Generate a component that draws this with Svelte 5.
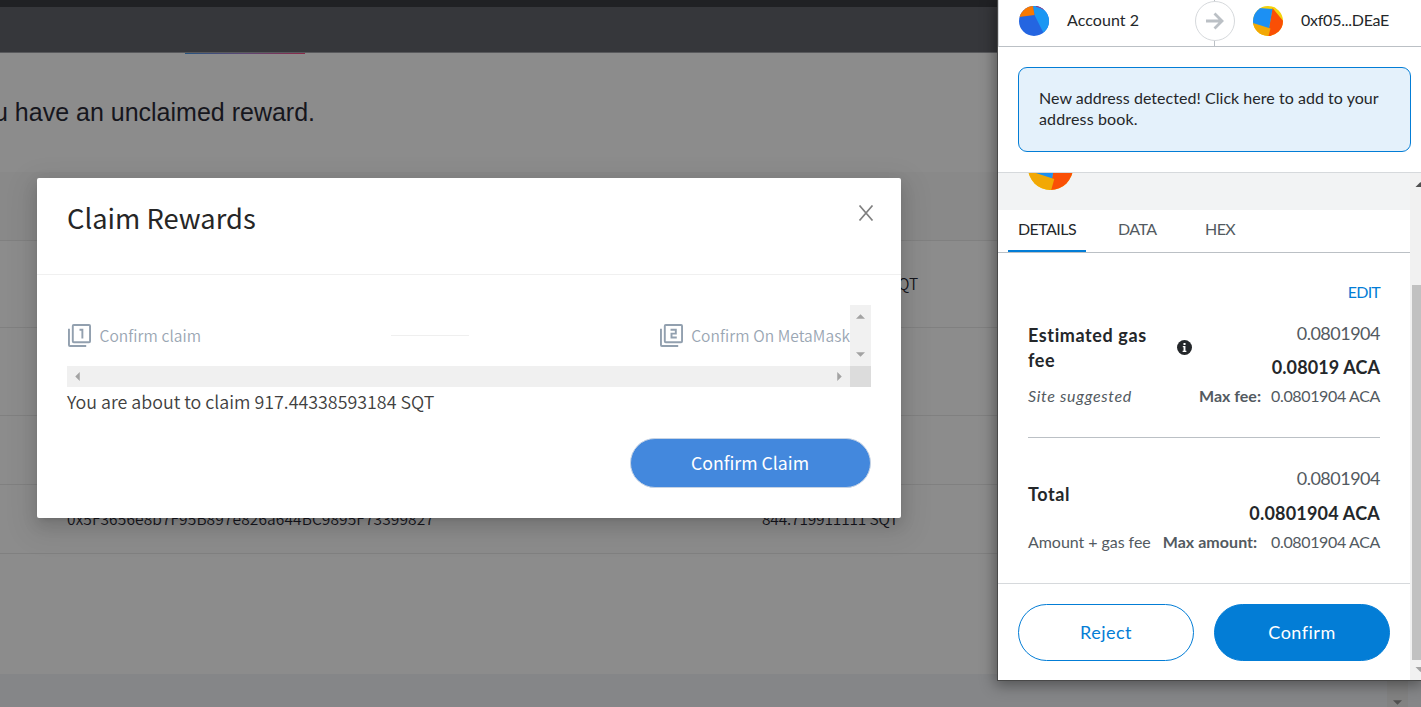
<script>
  const tabs = ['Details', 'Data', 'Hex'];
</script>

{#snippet orange(cls)}
  <svg class={cls} viewBox="0 0 30 30">
    <defs><clipPath id="{cls}-clip"><circle cx="15" cy="15" r="15" /></clipPath></defs>
    <g clip-path="url(#{cls}-clip)">
      <rect width="30" height="30" fill="#f4d20b" />
      <path d="M19.500 2L31 16V31H14L16 22Z" fill="#fa4f05" />
      <path d="M0 1.500L19.500 3L16 23L0 18Z" fill="#1c90f3" />
      <path d="M0 17L17.500 22.600L15.500 30H0Z" fill="#f2a805" />
    </g>
  </svg>
{/snippet}

{#snippet step(n)}
  <svg class="step-icon" viewBox="0 0 24 24" fill="none" stroke="#92a0af" stroke-width="2">
    <rect x="5" y="1" width="18" height="18" rx="1" />
    <path d="M1 5V22a1 1 0 0 0 1 1H19" />
    {#if n === 1}<path d="M12 6H15V15" />{:else}<path d="M11 6H16.500V10H12V14H17.500" />{/if}
  </svg>
{/snippet}

<div class="screen">
  <main class="page">
    <div class="strip"></div>
    <div class="navbar"></div>
    <div class="underline"></div>
    <h1><span>u have an unclaimed reward.</span></h1>
    <div class="row head"></div>
    <div class="row r1"><span>917.443385931 SQT</span></div>
    <div class="row r2"><span>844.719911111 SQT</span></div>
    <div class="row r3"></div>
    <div class="row r4"><span class="hash">0x5F3656e8b7F95B897e826a644BC9895F73399827</span><span class="amt">844.719911111 SQT</span></div>
    <div class="space"></div>
    <footer><div class="pagebar"><svg viewBox="0 0 10 5"><path d="M0 0H10L5 5Z" fill="#505050" /></svg></div></footer>
  </main>

  <section class="dialog">
    <header>
      <h2>Claim Rewards</h2>
      <svg class="close" viewBox="0 0 16 16"><path d="M1.500 .5L14.500 15.500M14.500 .5L1.500 15.500" stroke="#808080" stroke-width="1.700" /></svg>
    </header>
    <div class="body">
      <div class="scroller">
        <div class="steps">
          {@render step(1)}<span>Confirm claim</span>
          <i></i>
          {@render step(2)}<span>Confirm On MetaMask</span>
        </div>
        <div class="vbar">
          <svg viewBox="0 0 10 5"><path d="M0 5L5 0L10 5Z" /></svg>
          <svg viewBox="0 0 10 5"><path d="M0 0H10L5 5Z" /></svg>
        </div>
        <div class="hbar">
          <svg viewBox="0 0 5 10"><path d="M5 0V10L0 5Z" /></svg>
          <svg viewBox="0 0 5 10"><path d="M0 0V10L5 5Z" /></svg>
        </div>
        <div class="corner"></div>
      </div>
      <p>You are about to claim 917.44338593184 SQT</p>
      <button class="claim">Confirm Claim</button>
    </div>
  </section>

  <aside class="wallet">
    <div class="parties">
      <svg class="avatar" viewBox="0 0 30 30">
        <defs><clipPath id="blue-clip"><circle cx="15" cy="15" r="15" /></clipPath></defs>
        <g clip-path="url(#blue-clip)">
          <rect width="30" height="30" fill="#2465e1" />
          <path d="M14 0H30V30H26L15.500 9Z" fill="#1b97f3" />
          <path d="M0 0H14L15.500 9L0 11Z" fill="#fa7900" />
          <path d="M17 0H25V4Q21 1.200 17 .8Z" fill="#c81456" />
        </g>
      </svg>
      <span class="from">Account 2</span>
      <div class="arrow">
        <div class="ring"><svg viewBox="0 0 18 18" fill="none" stroke="#bbc0c5" stroke-width="2.800"><path d="M0 9H16M8.500 1.500L16 9L8.500 16.500" /></svg></div>
      </div>
      {@render orange('avatar')}
      <span class="to">0xf05...DEaE</span>
    </div>
    <div class="notice-wrap"><div class="notice">New address detected! Click here to add to your<br /><span>address book.</span></div></div>
    <div class="content">
      <div class="main">
        <div class="band">{@render orange('big')}</div>
        <nav>
          {#each tabs as t, i}<div class="tab t{i}" class:on={i === 0}>{t}</div>{/each}
        </nav>
        <div class="fees">
          <div class="edit">EDIT</div>
          <div class="item">
            <div class="label">Estimated gas<br />fee</div>
            <svg class="info" viewBox="0 0 16 16"><circle cx="8" cy="8" r="8" fill="#24272a" /><path d="M6.200 6.500H9V11.500H10V12.800H6V11.500H7V7.800H6.200ZM6.900 3.300H9.100V5.300H6.900Z" fill="#fff" /></svg>
            <div class="nums"><div>0.0801904</div><b>0.08019 ACA</b></div>
          </div>
          <div class="sub"><em>Site suggested</em><strong>Max fee:</strong><span>0.0801904 ACA</span></div>
          <hr />
          <div class="item total">
            <div class="label">Total</div>
            <div class="nums"><div>0.0801904</div><b class="wide">0.0801904 ACA</b></div>
          </div>
          <div class="sub"><small>Amount + gas fee</small><strong class="ma">Max amount:</strong><span>0.0801904 ACA</span></div>
        </div>
        <div class="actions"><button>Reject</button><button class="primary">Confirm</button></div>
      </div>
      <div class="sbar">
        <svg viewBox="0 0 10 5"><path d="M0 5L5 0L10 5Z" fill="#505050" /></svg>
        <div class="thumb"></div>
        <svg viewBox="0 0 10 5"><path d="M0 0H10L5 5Z" fill="#a3a3a3" /></svg>
      </div>
    </div>
  </aside>
</div>

<style>
  :global(body) { margin: 0; overflow: hidden; }
  .screen, .screen * { box-sizing: border-box; }
  h1, h2, p { margin: 0; font-weight: 400; }
  svg { display: block; flex: none; }
  .screen { position: relative; width: 1421px; height: 707px; overflow: hidden; font-family: "Noto Sans CJK SC", sans-serif; }

  .page { display: flex; flex-direction: column; height: 707px; background: #8c8c8c; color: #16161d; }
  .strip { height: 7px; background: #202124; }
  .navbar { height: 46px; background: #36373b; border-bottom: 1px solid #58595c; }
  .underline { width: 120px; height: 1px; margin-left: 185px; background: linear-gradient(90deg, #26537f, #5d4673 50%, #8b2848); }
  h1 { height: 118px; font: 25px/117px "Liberation Sans", sans-serif; white-space: nowrap; }
  h1 span { margin-left: -6px; }
  .row { display: flex; align-items: center; border-bottom: 1px solid #808080; font-size: 15.500px; white-space: nowrap; }
  .head { height: 69px; background: #898989; }
  .r1 { height: 87px; padding: 0 0 2px 779px; }
  .r2 { height: 88px; padding-left: 762px; }
  .r3 { height: 69px; }
  .r4 { height: 69px; padding: 0 0 2px 67px; }
  .hash { width: 695px; letter-spacing: .12px; }
  .row span { font-weight: 350; }
  .amt, .r2 span { letter-spacing: -.16px; }
  .space { flex: 1; }
  footer { height: 33px; background: #858688; display: flex; padding-left: 1387px; }
  .pagebar { width: 21px; background: #828282; padding: 26px 0 0 6px; }
  .pagebar svg { width: 9px; height: 5px; }

  .dialog { position: absolute; left: 37px; top: 178px; width: 864px; height: 340px; background: #fff; border-radius: 2px; box-shadow: 0 6px 16px rgba(0,0,0,.12), 0 3px 6px -4px rgba(0,0,0,.2), 0 9px 28px 8px rgba(0,0,0,.08); }
  .dialog header { height: 97px; display: flex; justify-content: space-between; padding: 18px 27px 0 30px; border-bottom: 1px solid #f0f0f0; }
  h2 { font-size: 27.300px; line-height: 42px; color: #262626; }
  .close { width: 16px; height: 16px; margin-top: 9px; }
  .body { padding: 30px 30px 0; }
  .scroller { display: grid; grid-template-columns: 783px 21px; grid-template-rows: 61px 21px; }
  .steps { display: flex; align-items: center; padding: 0 0 1px 1px; font-size: 15.550px; letter-spacing: .07px; color: #9aa6b3; white-space: nowrap; overflow: hidden; }
  .steps span { font-weight: 350; margin-left: 8.500px; }
  .steps i { width: 78px; height: 1px; background: #efefef; margin: 0 190.500px 0 190px; }
  .step-icon { width: 23px; height: 23px; }
  .vbar { background: #f1f1f1; display: flex; flex-direction: column; justify-content: space-between; align-items: center; padding: 9px 0; }
  .hbar { background: #f0f0f0; display: flex; justify-content: space-between; align-items: center; padding: 0 8px; }
  .vbar svg { width: 9px; height: 5px; fill: #a3a3a3; }
  .hbar svg { width: 5px; height: 9px; fill: #a3a3a3; }
  .corner { background: #dcdcdc; }
  p { font-size: 17.850px; line-height: 28px; font-weight: 350; color: #404040; white-space: nowrap; }
  button { font: inherit; padding: 0; }
  .claim { display: block; width: 241px; height: 50px; margin: 23px 0 0 auto; border: 1px solid #c6d3e4; border-radius: 25px; background: #4388dd; color: #fff; font-size: 17.700px; font-weight: 400; line-height: 45px; padding: 0 1px 1px 0; }

  .wallet { position: absolute; left: 997px; top: 0; width: 424px; height: 681px; background: #fff; border: solid #484848; border-width: 0 0 1px 1px; box-shadow: 0 2px 14px 2px rgba(0,0,0,.4); font-family: Lato, sans-serif; font-size: 16px; color: #24272a; display: flex; flex-direction: column; font-variant-ligatures: none; }
  .parties { height: 47px; border-bottom: 1px solid #bbc0c5; border-left: 1px solid #d6d9dc; display: flex; align-items: center; padding: 0 0 5px 20px; white-space: nowrap; }
  .avatar { width: 30px; height: 30px; }
  .from { width: 128px; margin-left: 18px; padding-bottom: 2px; letter-spacing: .07px; }
  .arrow { width: 40px; height: 46px; align-self: flex-start; margin-right: 18px; padding-top: 1px; background: linear-gradient(#bbc0c5, #bbc0c5) 19px 0 / 1px 46px no-repeat; }
  .ring { width: 40px; height: 40px; border: 1px solid #d6d9dc; border-radius: 50%; background: #fff; display: grid; place-items: center; }
  .ring svg { width: 18px; height: 18px; }
  .to { margin-left: 18px; letter-spacing: -.25px; padding-bottom: 2px; }
  .notice-wrap { height: 126px; padding: 20px 10px 20px 20px; border-bottom: 1px solid #d6d9dc; }
  .notice { height: 85px; border: 1px solid #037dd6; border-radius: 9px; background: #e4f1fb; padding: 19px 20px; line-height: 21px; letter-spacing: .04px; white-space: nowrap; }
  .notice span { letter-spacing: .15px; }
  .content { flex: 1; display: flex; min-height: 0; }
  .main { width: 412px; }
  .band { height: 37px; background: #f2f3f4; overflow: hidden; padding-left: 30px; }
  .big { width: 45px; height: 45px; margin-top: -28px; }
  nav { height: 43px; border-bottom: 1px solid #bbc0c5; display: flex; padding-left: 10px; text-transform: uppercase; color: #535a61; line-height: 37px; }
  .tab { height: 42px; padding: 0 10px; letter-spacing: -.55px; }
  .t0 { width: 78px; margin-right: 22px; }
  .t1 { width: 59px; margin-right: 28px; }
  .on { color: #24272a; border-bottom: 2px solid #037dd6; }
  .fees { height: 331px; padding: 29px 30px 0; border-bottom: 1px solid #d6d9dc; }
  .edit { text-align: right; color: #037dd6; line-height: 20px; letter-spacing: -.8px; }
  .item { display: flex; align-items: center; height: 68px; margin-top: 11px; }
  .label { font-size: 18px; line-height: 25px; font-weight: 700; letter-spacing: .6px; width: 149px; padding-top: 1px; white-space: nowrap; }
  .info { width: 15px; height: 15px; }
  .nums { margin-left: auto; text-align: right; font-size: 18px; line-height: 34px; color: #535a61; letter-spacing: -.5px; margin-top: 6px; }
  .nums b { display: block; color: #24272a; letter-spacing: .1px; }
  .nums .wide { letter-spacing: .2px; }
  .sub { display: flex; line-height: 20px; margin-top: 5px; height: 20px; color: #535a61; white-space: nowrap; }
  .sub em { letter-spacing: .68px; }
  .sub small { font-size: 16px; letter-spacing: -.05px; }
  .sub strong { margin-left: auto; }
  .sub span { width: 110px; margin-left: 9px; letter-spacing: -.36px; text-align: right; }
  .sub .ma { margin-left: 12px; letter-spacing: .05px; }
  .sub .ma + span { margin-left: auto; }
  hr { border: 0; height: 1px; background: #bbc0c5; margin: 31px 0 0; }
  .total { margin-top: 20px; height: 71px; }
  .total .nums { margin-top: 5px; }
  .total b { line-height: 36px; }
  .total + .sub { margin-top: 3px; }
  .actions { display: flex; gap: 20px; padding: 20px 20px 19px; }
  .actions button { width: 176px; height: 57px; border: 1px solid #037dd6; border-radius: 29px; background: #fff; color: #037dd6; font-size: 18px; letter-spacing: .5px; padding-bottom: 2px; }
  .actions .primary { background: #037dd6; color: #fff; }
  .sbar { width: 11px; overflow: hidden; background: #f1f1f1; display: flex; flex-direction: column; padding: 9px 0 0 5px; }
  .sbar svg { width: 11px; height: 5px; }
  .thumb { flex: none; width: 17px; height: 375px; background: #c1c1c1; margin: 98px 0 7px -3px; }
</style>
